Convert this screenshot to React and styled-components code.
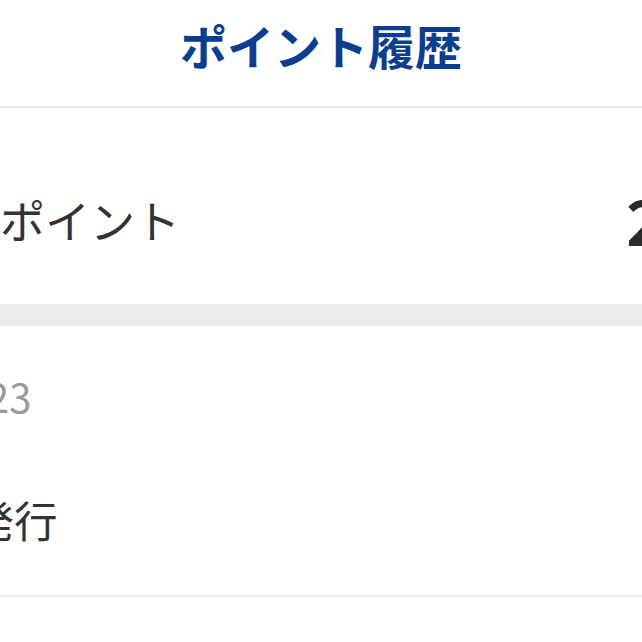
import styled, { createGlobalStyle } from 'styled-components';

const GlobalStyle = createGlobalStyle`
  html, body {
    margin: 0;
    padding: 0;
    background: #fff;
    overflow: hidden;
  }
  body {
    font-family: "Noto Sans CJK JP", "Noto Sans", sans-serif;
    color: #333;
  }
`;

const history = [
  { date: '12/23', title: '再発行' },
];

export default function App() {
  return (
    <>
      <GlobalStyle />
      <Page>
        <Header>
          <Title>ポイント履歴</Title>
        </Header>
        <SummaryRow>
          <SummaryLabel>保有ポイント</SummaryLabel>
          <SummaryValue>250</SummaryValue>
        </SummaryRow>
        <Band />
        {history.map((item) => (
          <HistoryItem key={item.date} $indent={44}>
            <HistoryDate>{item.date}</HistoryDate>
            <HistoryTitle>{item.title}</HistoryTitle>
          </HistoryItem>
        ))}
      </Page>
    </>
  );
}

const Page = styled.div`
  width: 876px;
  margin-left: -117px;
  background: #fff;
`;

const Header = styled.header`
  height: 108px;
  box-sizing: border-box;
  padding-bottom: 18px;
  display: flex;
  align-items: center;
  justify-content: center;
  border-bottom: 2px solid #e6e6e6;
`;

const Title = styled.h1`
  margin: 0;
  font-size: 47px;
  line-height: 1;
  font-weight: 700;
  color: #0b3e8f;
`;

const SummaryRow = styled.div`
  height: 196px;
  box-sizing: border-box;
  padding: 26px 23px 0 27px;
  display: flex;
  align-items: center;
  justify-content: space-between;
`;

const SummaryLabel = styled.span`
  font-size: 45px;
  line-height: 1;
  color: #333;
`;

const SummaryValue = styled.span`
  font-size: 62px;
  line-height: 1;
  font-weight: 700;
  color: #2b2b2b;
`;

const Band = styled.div`
  height: 22px;
  background: #ebebeb;
`;

const HistoryItem = styled.div`
  height: 271px;
  box-sizing: border-box;
  padding: 46px 32px 0 ${(p) => p.$indent}px;
  display: flex;
  flex-direction: column;
  gap: 74px;
  border-bottom: 2px solid #ebebeb;
`;

const HistoryDate = styled.span`
  font-size: 40px;
  line-height: 1.2;
  color: #9a9a9a;
`;

const HistoryTitle = styled.span`
  font-size: 43.5px;
  line-height: 1.2;
  color: #333;
`;
